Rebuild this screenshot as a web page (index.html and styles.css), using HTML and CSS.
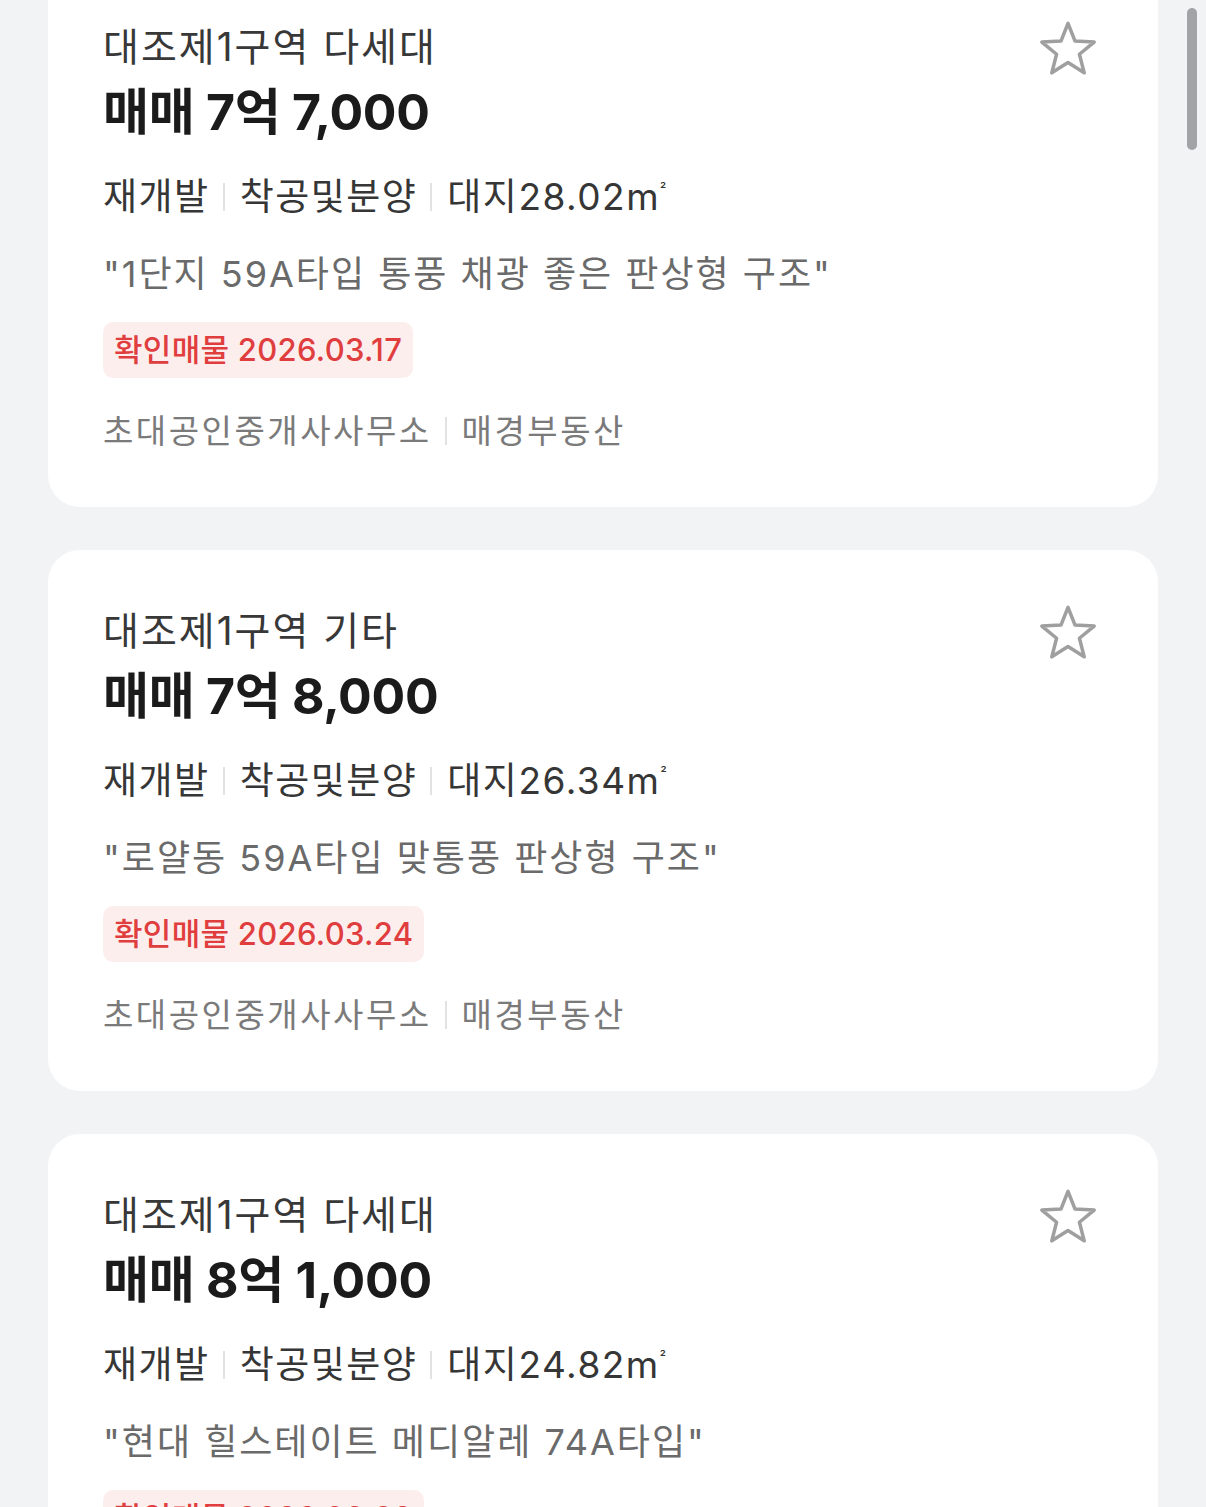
FILE: index.html
```html
<!DOCTYPE html>
<html lang="ko">
<head>
<meta charset="utf-8">
<link rel="stylesheet" href="styles.css">
</head>
<body>
<div class="list">
  <div class="card">
    <div class="info">
      <div class="title">대조제1구역 다세대</div>
      <div class="price">매매 7억 7,000</div>
      <div class="details"><span>재개발</span><i class="sep"></i><span>착공및분양</span><i class="sep"></i><span>대지28.02m<span class="sq">²</span></span></div>
      <div class="quote">"1단지 59A타입 통풍 채광 좋은 판상형 구조"</div>
      <div class="badge">확인매물 2026.03.17</div>
      <div class="agency"><span>초대공인중개사사무소</span><i class="sep"></i><span>매경부동산</span></div>
    </div>
    <svg class="star" viewBox="0 0 60 60"><path d="M30 5 L36.6 21.6 L54.5 22.6 L40.7 34 L45.2 51.4 L30 41.8 L14.8 51.4 L19.3 34 L5.5 22.6 L23.4 21.6 Z"/></svg>
  </div>
  <div class="card">
    <div class="info">
      <div class="title">대조제1구역 기타</div>
      <div class="price">매매 7억 8,000</div>
      <div class="details"><span>재개발</span><i class="sep"></i><span>착공및분양</span><i class="sep"></i><span>대지26.34m<span class="sq">²</span></span></div>
      <div class="quote">"로얄동 59A타입 맞통풍 판상형 구조"</div>
      <div class="badge">확인매물 2026.03.24</div>
      <div class="agency"><span>초대공인중개사사무소</span><i class="sep"></i><span>매경부동산</span></div>
    </div>
    <svg class="star" viewBox="0 0 60 60"><path d="M30 5 L36.6 21.6 L54.5 22.6 L40.7 34 L45.2 51.4 L30 41.8 L14.8 51.4 L19.3 34 L5.5 22.6 L23.4 21.6 Z"/></svg>
  </div>
  <div class="card">
    <div class="info">
      <div class="title">대조제1구역 다세대</div>
      <div class="price">매매 8억 1,000</div>
      <div class="details"><span>재개발</span><i class="sep"></i><span>착공및분양</span><i class="sep"></i><span>대지24.82m<span class="sq">²</span></span></div>
      <div class="quote">"현대 힐스테이트 메디알레 74A타입"</div>
      <div class="badge">확인매물 2026.03.28</div>
      <div class="agency"><span>초대공인중개사사무소</span><i class="sep"></i><span>매경부동산</span></div>
    </div>
    <svg class="star" viewBox="0 0 60 60"><path d="M30 5 L36.6 21.6 L54.5 22.6 L40.7 34 L45.2 51.4 L30 41.8 L14.8 51.4 L19.3 34 L5.5 22.6 L23.4 21.6 Z"/></svg>
  </div>
</div>
<div class="scrollbar"></div>
</body>
</html>
```

FILE: styles.css
```css
html, body {
  margin: 0;
  padding: 0;
  background: #f2f3f5;
  font-family: "Inter", "Noto Sans CJK KR", "Noto Sans", sans-serif;
  overflow: hidden;
}
.list {
  display: flex;
  flex-direction: column;
  gap: 43px;
  padding: 0 48px;
  margin-top: -34px;
}
.card {
  background: #fff;
  border-radius: 32px;
  padding: 56px 55px 51px 55px;
  display: flex;
  justify-content: space-between;
  align-items: flex-start;
}
.info {
  display: flex;
  flex-direction: column;
  align-items: flex-start;
}
.title {
  font-size: 39px;
  line-height: 50px;
  color: #383838;
  letter-spacing: 2px;
}
.price {
  font-size: 50px;
  line-height: 80px;
  font-weight: 700;
  color: #1b1b1b;
  letter-spacing: -0.3px;
}
.details, .agency {
  display: flex;
  align-items: center;
  font-size: 37px;
  line-height: 50px;
  color: #363636;
  margin-top: 20px;
  letter-spacing: 1.5px;
}
.agency {
  color: #7a7a7a;
  margin-top: 28px;
  font-size: 33px;
  letter-spacing: 2.5px;
}
.sq {
  font-size: 14px;
  vertical-align: 16px;
  line-height: 1;
  letter-spacing: 0;
}
.sep {
  display: block;
  width: 2px;
  height: 28px;
  background: #e2e2e2;
  margin: 0 15px 0 13px;
}
.quote {
  font-size: 36px;
  line-height: 50px;
  color: #6a6a6a;
  margin-top: 27px;
  letter-spacing: 2px;
}
.badge {
  margin-top: 23px;
  height: 56px;
  line-height: 56px;
  padding: 0 11px;
  background: #fdeeee;
  border-radius: 10px;
  color: #e03e3e;
  font-size: 31px;
  font-weight: 500;
  letter-spacing: 0.3px;
}
.star {
  width: 64px;
  height: 64px;
  margin-top: -4px;
  margin-right: 3px;
  fill: none;
  stroke: #9f9f9f;
  stroke-width: 3.3;
  stroke-linejoin: round;
}
.scrollbar {
  position: fixed;
  left: 1187px;
  top: 8px;
  width: 10px;
  height: 142px;
  border-radius: 5px;
  background: #a3a3a7;
}
```
